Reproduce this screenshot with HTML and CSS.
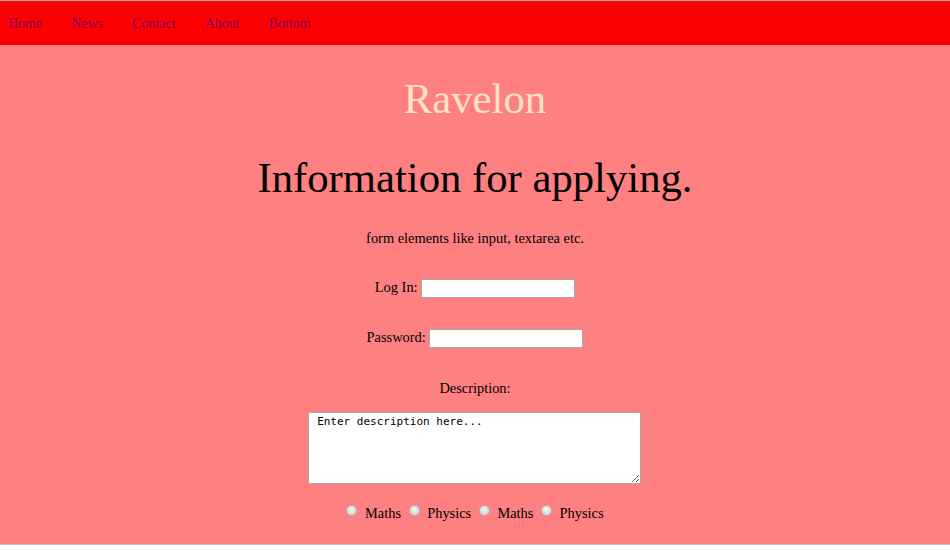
FILE: index.html
```html
<!DOCTYPE html>
<html lang="en">
<head>
<meta charset="utf-8">
<title>Ravelon</title>
<link rel="stylesheet" href="styles.css">
</head>
<body>
<div class="page">
  <nav class="topbar">
    <a href="#">Home</a>
    <a href="#">News</a>
    <a href="#">Contact</a>
    <a href="#">About</a>
    <a href="#">Bottom</a>
  </nav>
  <main class="content">
    <h1 class="brand">Ravelon</h1>
    <h2 class="title">Information for applying.</h2>
    <p class="intro">form elements like input, textarea etc.</p>
    <div class="row login">Log In: <input type="text" class="field"></div>
    <div class="row password">Password: <input type="password" class="field"></div>
    <div class="row desc-label">Description:</div>
    <div class="row desc-box"><textarea class="desc"> Enter description here...</textarea></div>
    <div class="row radios">
      <label class="opt"><input type="radio" name="s1" class="radio"> Maths</label>
      <label class="opt"><input type="radio" name="s1" class="radio"> Physics</label>
      <label class="opt"><input type="radio" name="s2" class="radio"> Maths</label>
      <label class="opt"><input type="radio" name="s2" class="radio"> Physics</label>
    </div>
  </main>
</div>
</body>
</html>
```
FILE: styles.css
```css
html, body {
  margin: 0;
  padding: 0;
  background: #ffffff;
  height: 550px;
  overflow: hidden;
}
.page {
  border-top: 1px solid #a8a8a8;
  border-bottom: 1px solid #c4c4c4;
  background: #ff8080;
  height: 543px;
  font-family: "Liberation Serif", "Times New Roman", serif;
  font-size: 14.4px;
  color: #000;
}
.topbar {
  box-sizing: border-box;
  height: 44px;
  padding-top: 2px;
  background: #ff0000;
  display: flex;
  align-items: center;
  gap: 29px;
  padding-left: 8px;
  font-size: 14px;
}
.topbar a {
  color: #800060;
  text-decoration: none;
}
.content {
  text-align: center;
}
.brand {
  margin: 29px 0 0;
  font-size: 42.7px;
  line-height: 50px;
  font-weight: normal;
  color: #ffe4c4;
}
.title {
  margin: 29px 0 0;
  font-size: 42.7px;
  line-height: 50px;
  font-weight: normal;
}
.intro {
  margin: 26px 0 0;
  line-height: 18px;
}
.row {
  line-height: 20px;
}
.login { margin-top: 30px; }
.password { margin-top: 29px; }
.desc-label { margin-top: 30px; }
.desc-box { margin-top: 14px; line-height: 0; }
.radios { margin-top: 19px; }
.field {
  box-sizing: border-box;
  width: 154px;
  height: 19px;
  border: 1px solid #a9a9a9;
  background: #fff;
  vertical-align: middle;
  padding: 0 2px;
  margin: 0;
}
.desc {
  box-sizing: border-box;
  width: 333px;
  height: 72px;
  border: 1px solid #a9a9a9;
  background: #fff;
  font-family: "DejaVu Sans Mono", "Liberation Mono", monospace;
  font-size: 11px;
  line-height: 13px;
  padding: 2px 2px;
  margin: 0 2px 0 0;
  color: #000;
  resize: both;
}
.opt {
  margin: 0 2px;
}
.radio {
  -webkit-appearance: none;
  appearance: none;
  width: 11px;
  height: 11px;
  border-radius: 50%;
  border: 1px solid #b4b4b4;
  background: radial-gradient(circle at 50% 40%, #f4f4f4 0%, #dcdcdc 60%, #c8c8c8 100%);
  margin: 0 4px 0 0;
  vertical-align: 2px;
  box-sizing: border-box;
}
```
